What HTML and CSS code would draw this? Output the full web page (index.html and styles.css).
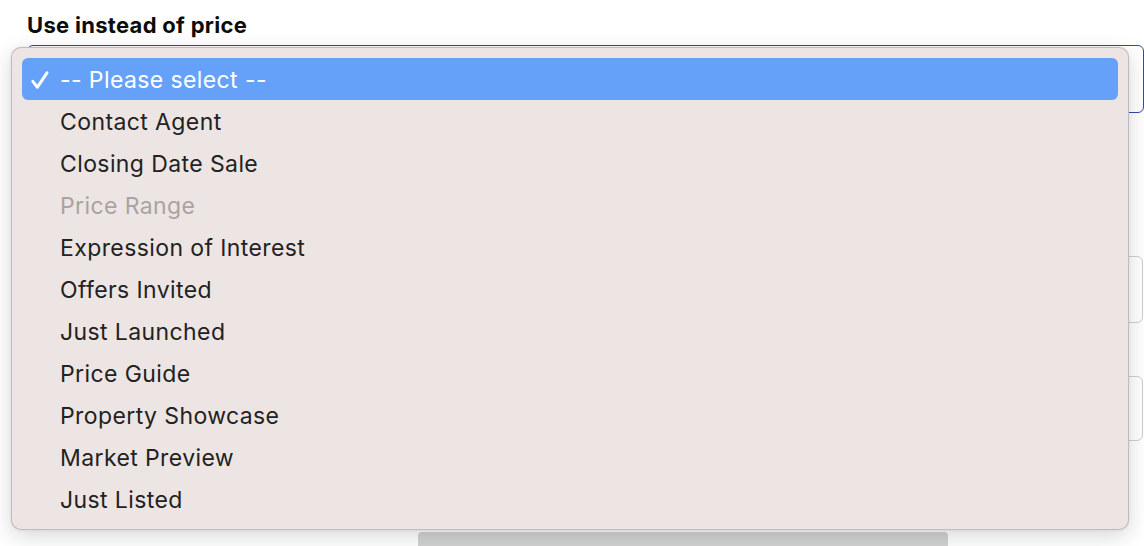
FILE: index.html
```html
<!DOCTYPE html>
<html>
<head>
<meta charset="utf-8">
<link rel="stylesheet" href="styles.css">
</head>
<body>
<div class="page">
  <div class="field">
    <label class="label">Use instead of price</label>
    <div class="select-box"></div>
  </div>
  <div class="input-box first"></div>
  <div class="input-box second"></div>
  <div class="scrollbar"></div>

  <ul class="menu">
    <li class="item selected"><span class="check"><svg width="20" height="20" viewBox="0 0 20 20"><path d="M2.8 11.4 L7.4 17.2 L17 2.8" fill="none" stroke="#fff" stroke-width="3" stroke-linecap="round" stroke-linejoin="round"/></svg></span>-- Please select --</li>
    <li class="item">Contact Agent</li>
    <li class="item">Closing Date Sale</li>
    <li class="item disabled">Price Range</li>
    <li class="item">Expression of Interest</li>
    <li class="item">Offers Invited</li>
    <li class="item">Just Launched</li>
    <li class="item">Price Guide</li>
    <li class="item">Property Showcase</li>
    <li class="item">Market Preview</li>
    <li class="item">Just Listed</li>
  </ul>
</div>
</body>
</html>
```
FILE: styles.css
```css
* { box-sizing: border-box; }
html, body { margin: 0; padding: 0; }
body {
  background: #fff;
  font-family: Inter, "Noto Sans", sans-serif;
  width: 1144px;
  height: 546px;
  overflow: hidden;
}
.page {
  position: relative;
  width: 1144px;
  height: 546px;
  padding: 12px 0 0 27px;
}
.field { display: flex; flex-direction: column; }
.label {
  font-size: 22px;
  font-weight: 700;
  letter-spacing: 0.3px;
  color: #0c0c0c;
  line-height: 26px;
  height: 33px;
}
.select-box {
  width: 1117px;
  height: 68px;
  border: 1px solid #3646aa;
  border-radius: 6px;
  background: #fff;
}
.input-box {
  width: 1116px;
  height: 67px;
  border: 1px solid #cfcfcf;
  border-radius: 6px;
  background: #fff;
}
.input-box.first { margin-top: 143px; }
.input-box.second { margin-top: 53px; height: 65px; }
.scrollbar {
  position: absolute;
  left: 418px;
  top: 532px;
  width: 530px;
  height: 20px;
  background: #d2d2d2;
  border-radius: 4px;
}
.menu {
  position: absolute;
  left: 11px;
  top: 47px;
  width: 1118px;
  height: 483px;
  margin: 0;
  padding: 10px 10px 10px;
  list-style: none;
  background: #ede5e4;
  border-radius: 10px;
  border: 1px solid rgba(0,0,0,0.18);
  box-shadow: 0 6px 22px rgba(0,0,0,0.16), 0 0 3px rgba(0,0,0,0.08);
}
.item {
  position: relative;
  height: 42px;
  padding-top: 2px;
  line-height: 40px;
  padding-left: 38px;
  font-size: 23px;
  letter-spacing: 0.4px;
  color: #222;
  border-radius: 6px;
  white-space: nowrap;
}
.item.selected { background: #65a1f8; color: #fff; }
.item.disabled { color: #a9a3a2; }
.check {
  position: absolute;
  left: 8px;
  top: 12px;
  width: 20px;
  height: 20px;
  display: block;
}
.check svg { display: block; }
```
